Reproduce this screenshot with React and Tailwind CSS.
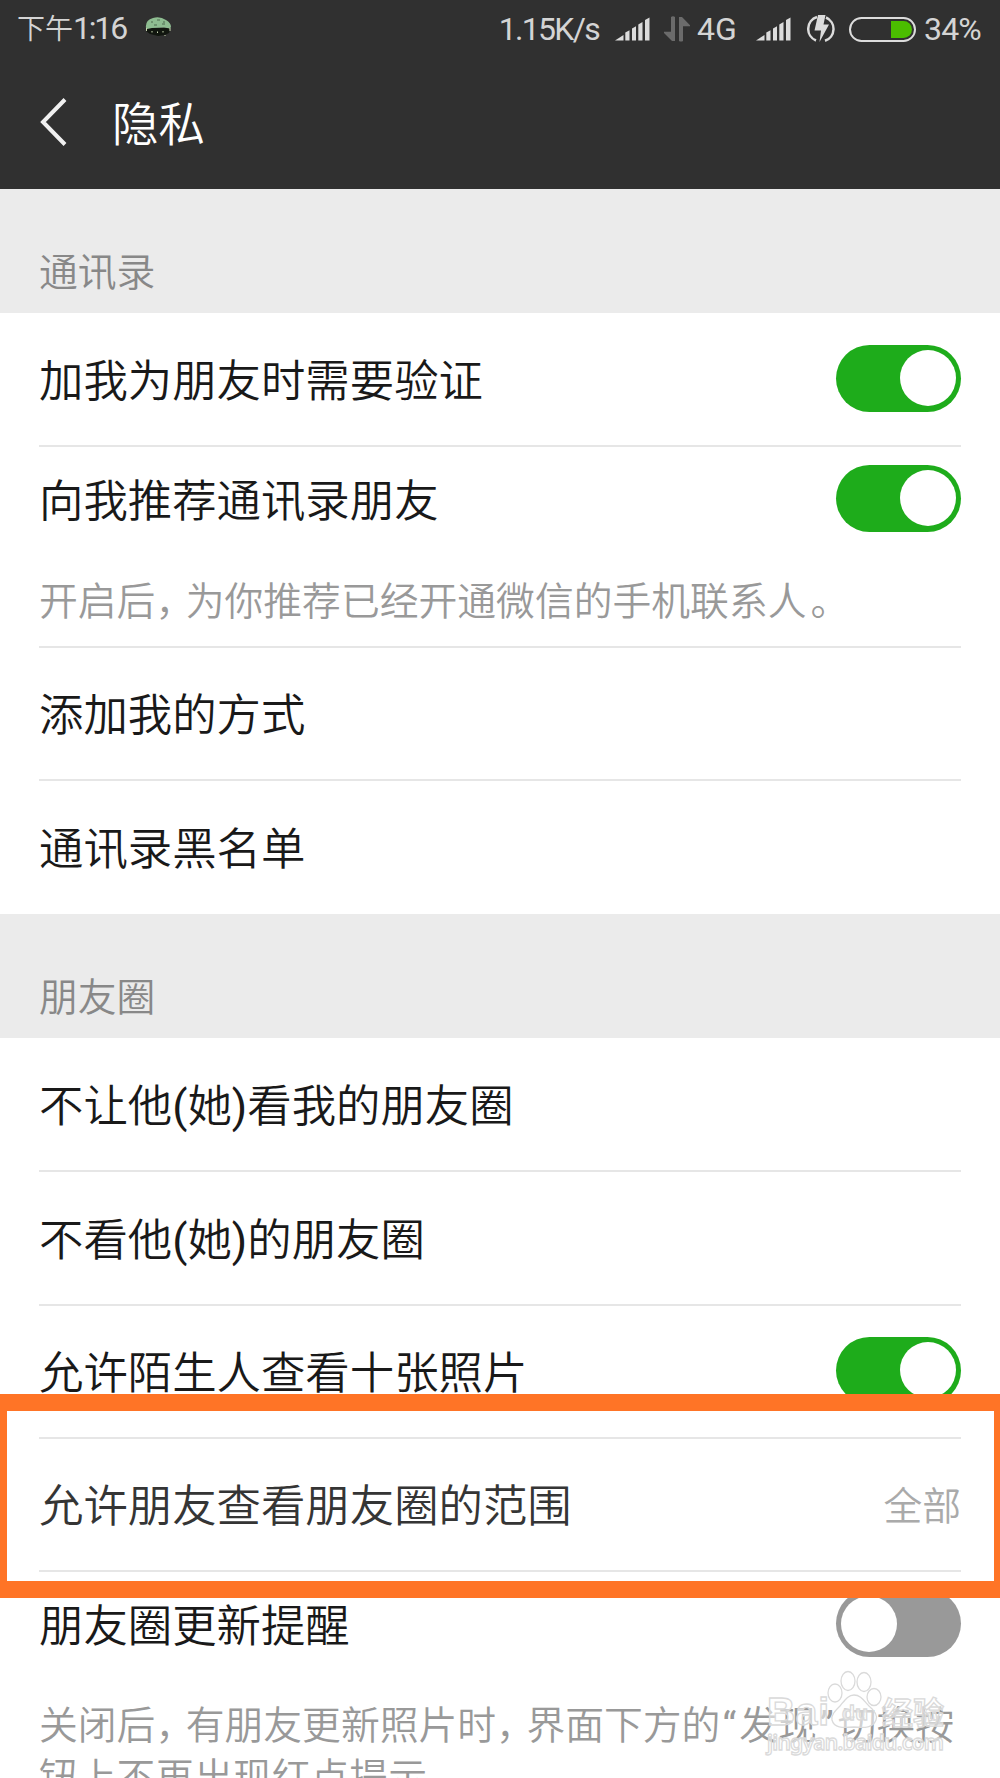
const SignalBars = () => (
  <svg width="35" height="24" viewBox="0 0 35 24" fill="#dcdcdc" className="shrink-0">
    <path d="M0 23.5L8.500 18v5.500z" />
    <path d="M10.300 15.500l4.200-2.300v10.300h-4.200z" />
    <path d="M17 11.500l4-2.200v14.200h-4z" />
    <path d="M23.300 7.500l4.200-2.500v18.500h-4.200z" />
    <path d="M30 3l4.500-2.500v23H30z" />
  </svg>
);

const DataArrows = () => (
  <svg width="26" height="26" viewBox="0 0 26 26" fill="#6b6b6b" className="shrink-0">
    <path d="M7 1q2-1.500 4 0v24H8L0 17v-1.200h7z" />
    <path d="M15 1h3l8 8.300v1h-7V25q-2 1-4 0z" />
  </svg>
);

const Mushroom = () => (
  <svg width="27" height="21" viewBox="0 0 27 21" className="shrink-0">
    <path d="M2 11h22l1 2-1 3-4 2-7 1-8-2-4-3z" fill="#11160f" />
    <path d="M1 11Q0 3 8 1q7-2 13 2 5 3 5 7l-1 1.500-6-1-12 .5-5 1z" fill="#8ebd91" />
    <path d="M6 5h2M12 3h3M18 5h2M9 8h3M17 7h3" stroke="#4c6b4f" strokeWidth="1" />
    <path d="M1.500 11v3M25 11v3M7 14v1.500M12.500 14.500V16M18 14v1.500M19.500 18.500h1" stroke="#c9d6b0" strokeWidth="1" />
  </svg>
);

const Charging = () => (
  <svg width="28" height="28" viewBox="0 0 28 28" className="shrink-0">
    <path d="M10 2A12.500 12.500 0 0 0 9 25.500M19 2.500A12.500 12.500 0 0 1 18 25.800" fill="none" stroke="#dcdcdc" strokeWidth="2.500" />
    <path d="M11 0h7.500l-2 9.500H22L12.500 27l1.500-11.500H7.500z" fill="#dcdcdc" />
  </svg>
);

const Battery = () => (
  <div className="flex h-[25px] w-[67px] shrink-0 justify-end rounded-full border-2 border-[#dcdcdc] p-[2px]">
    <div className="w-[21px] rounded-r-full bg-[#4bbd00]" />
  </div>
);

const Toggle = ({ on }) => (
  <div
    className={
      on
        ? "flex h-[67px] w-[125px] shrink-0 items-center justify-end rounded-full bg-[#1eac1b] px-[5px]"
        : "flex h-[67px] w-[125px] shrink-0 items-center justify-start rounded-full bg-[#999999] px-[5px]"
    }
  >
    <div className="size-14 rounded-full bg-white" />
  </div>
);

const SectionTitle = ({ children }) => (
  <div className="flex h-[124px] items-end bg-[#ebebeb] px-[39px] pb-[11px] text-[38.8px] leading-[58px] text-[#888888]">
    {children}
  </div>
);

const Label = ({ tone = "text-[#191919]", children }) => (
  <span className={`pt-[7px] text-[44.400px] leading-[60px] whitespace-nowrap ${tone}`}>{children}</span>
);

const Row = ({ label, height = "h-[133.500px]", line = true, tone, children }) => (
  <div className="px-[39px]">
    <div
      className={
        line
          ? `flex ${height} items-center justify-between border-b-2 border-[#e6e6e6] pb-[1.500px]`
          : `flex ${height} items-center justify-between pb-[2px]`
      }
    >
      <Label tone={tone}>{label}</Label>
      {children}
    </div>
  </div>
);

const Comma = () => <span className="tracking-[-8.500px]">，</span>;

const Her = () => (
  <>
    <span className="font-normal">(</span>她<span className="font-normal">)</span>
  </>
);

const Watermark = () => (
  <svg
    className="absolute top-[1668px] left-[764px]"
    width="190"
    height="92"
    viewBox="0 0 190 92"
    fill="#ffffff"
    fillOpacity="0.55"
    stroke="#dadada"
    strokeWidth="1.300"
  >
    <ellipse cx="71" cy="25" rx="7" ry="9" />
    <ellipse cx="84" cy="13" rx="7" ry="9.500" />
    <ellipse cx="100" cy="14" rx="7" ry="9.500" />
    <ellipse cx="110" cy="29" rx="7" ry="8.500" />
    <path d="M90 27c7 0 10 6 15 11 6 5 9 9 7 14-3 8-11 8-22 7-12 1-20 1-22-7-1-5 3-9 8-14 5-6 8-11 14-11z" />
    <text x="3" y="57" fontFamily="Liberation Sans" fontWeight="700" fontSize="39" textLength="62">Bai</text>
    <text x="78" y="52" fontFamily="Liberation Sans" fontWeight="700" fontSize="21" textLength="26">du</text>
    <text x="118" y="56" fontFamily="Noto Sans CJK SC" fontWeight="700" fontSize="31">经验</text>
    <text x="3" y="82" fontFamily="Noto Sans" fontWeight="600" fontSize="21" textLength="177">jingyan.baidu.com</text>
  </svg>
);

export default function App() {
  return (
    <div className="relative h-[1778px] w-[1000px] overflow-hidden bg-white font-['Roboto','Noto_Sans_CJK_SC',sans-serif] font-[350]">
      <header className="h-[189px] bg-[#303030]">
        <div className="flex h-[58px] items-center px-[17px] text-[32px] leading-[40px] font-normal text-[#d4d4d4]">
          <span className="w-[110px] tracking-[-2.200px] whitespace-nowrap">
            <span className="text-[28px] font-[350] tracking-normal">下午</span>1:16
          </span>
          <div className="ml-[18px] pb-[3px]"><Mushroom /></div>
          <div className="ml-auto flex items-center">
            <span className="mr-[16px] tracking-[-1.700px]">1.15K/s</span>
            <SignalBars />
            <div className="ml-[14px]"><DataArrows /></div>
            <span className="ml-[7px] w-[42px]">4G</span>
            <div className="ml-[17px]"><SignalBars /></div>
            <div className="ml-[16px]"><Charging /></div>
            <div className="ml-[14px]"><Battery /></div>
            <span className="ml-[8px] w-[59px] tracking-[-0.800px]">34%</span>
          </div>
        </div>
        <div className="flex h-[131px] items-center pb-[3px] pl-[40px]">
          <svg width="28" height="48" viewBox="0 0 28 48" className="shrink-0">
            <path d="M25 1.500L3 24l22 22.500" fill="none" stroke="#f0f0f0" strokeWidth="4" />
          </svg>
          <h1 className="ml-[44px] pt-[5px] text-[46.500px] leading-[60px] text-white">隐私</h1>
        </div>
      </header>

      <SectionTitle>通讯录</SectionTitle>
      <Row label="加我为朋友时需要验证" height="h-[134px]"><Toggle on /></Row>
      <div className="mx-[39px] h-[200.500px] border-b-2 border-[#e6e6e6]">
        <div className="flex h-[103px] items-center justify-between pb-[1px]">
          <Label>向我推荐通讯录朋友</Label>
          <Toggle on />
        </div>
        <p className="mt-[23px] text-[38.8px] leading-[58px] whitespace-nowrap text-[#999999]">
          开启后<Comma />为你推荐已经开通微信的手机联系人<span className="ml-[4px]">。</span>
        </p>
      </div>
      <Row label="添加我的方式" />
      <Row label="通讯录黑名单" height="h-[133px]" line={false} />

      <SectionTitle>朋友圈</SectionTitle>
      <Row label={<>不让他<Her />看我的朋友圈</>} height="h-[134px]" />
      <Row label={<>不看他<Her />的朋友圈</>} />
      <Row label="允许陌生人查看十张照片" height="h-[133px]"><Toggle on /></Row>
      <Row label="允许朋友查看朋友圈的范围" tone="text-[#353535]">
        <span className="pt-[7px] text-[38.8px] text-[#aaaaaa]">全部</span>
      </Row>
      <div className="mx-[39px]">
        <div className="flex h-[103px] items-center justify-between">
          <Label>朋友圈更新提醒</Label>
          <Toggle on={false} />
        </div>
        <p className="mt-[25px] text-[38.8px] leading-[52px] whitespace-nowrap text-[#999999]">
          关闭后<Comma />有朋友更新照片时<Comma />界面下方的<span className="mr-[3px] ml-[2px] font-normal">“</span>发现
          <span className="mr-[4px] ml-[3px] font-normal">”</span>切换按
          <br />
          钮上不再出现红点提示。
        </p>
      </div>

      <div className="absolute top-[1394px] left-[-10px] h-[204px] w-[1010px] border-[17px] border-r-[6px] border-[#ff7426]" />
      <Watermark />
    </div>
  );
}
